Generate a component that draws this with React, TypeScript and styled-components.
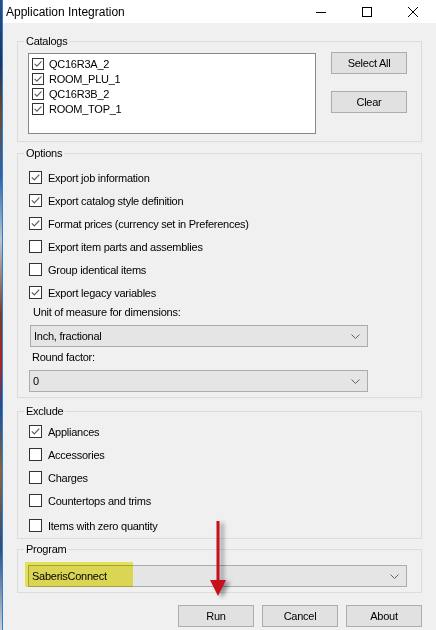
import * as React from 'react';
import styled, { createGlobalStyle } from 'styled-components';

const GlobalStyle = createGlobalStyle`
	html, body {
		margin: 0;
		padding: 0;
		background: #f0f0f0;
	}
	body {
		font-family: "Liberation Sans", Arial, sans-serif;
		color: #000;
	}
`;

const Screen = styled.div`
	position: relative;
	display: flex;
	width: 436px;
	height: 630px;
	overflow: hidden;
`;

const DesktopEdge = styled.div`
	flex: none;
	width: 2px;
	background: linear-gradient(
		to bottom,
		#2a4f86 0%, #1b3463 10%, #6b4a33 18%, #2d64a8 28%, #b9c4d0 38%,
		#7a3a2a 50%, #b02020 57%, #23508f 65%, #8a6240 75%, #2b4e80 87%, #c7ced6 100%
	);
`;

const Frame = styled.div`
	flex: 1;
	display: flex;
	flex-direction: column;
	border-left: 1px solid #2d7fd3;
	background: #f0f0f0;
`;

const TitleBar = styled.div`
	flex: none;
	display: flex;
	align-items: center;
	height: 23px;
	background: #fff;
`;

const Title = styled.div`
	flex: 1;
	padding-left: 3px;
	font-size: 12px;
`;

const CaptionButton = styled.div`
	display: flex;
	align-items: center;
	justify-content: center;
	width: 46px;
	height: 23px;
`;

const Body = styled.div`
	flex: 1;
	display: flex;
	flex-direction: column;
	padding: 12px 14px 0 14px;
	font-size: 11px;
	letter-spacing: -0.25px;
`;

const Group = styled.fieldset<{ $top?: number }>`
	margin: ${p => p.$top ?? 0}px 0 0 0;
	padding: 0;
	min-width: 0;
	border: 1px solid #dcdcdc;
`;

const Legend = styled.legend`
	margin-left: 6px;
	padding: 0 2px;
	line-height: 13px;
`;

const GroupInner = styled.div<{ $pad: string }>`
	padding: ${p => p.$pad};
`;

const CatalogRow = styled.div`
	display: flex;
	align-items: flex-start;
	gap: 15px;
`;

const ListBox = styled.div`
	box-sizing: border-box;
	width: 288px;
	height: 81px;
	padding-top: 2px;
	background: #fff;
	border: 1px solid #828790;
`;

const ListItem = styled.div`
	display: flex;
	align-items: center;
	gap: 5px;
	height: 15px;
	padding-left: 3px;
`;

const SideButtons = styled.div`
	display: flex;
	flex-direction: column;
	gap: 17px;
	margin-top: -1px;
`;

const Button = styled.div`
	box-sizing: border-box;
	display: flex;
	align-items: center;
	justify-content: center;
	width: 76px;
	height: 22px;
	background: #e1e1e1;
	border: 1px solid #adadad;
`;

const OptionRow = styled.div<{ $shift?: number }>`
	display: flex;
	align-items: center;
	gap: 6px;
	height: 23px;
	margin-top: ${p => p.$shift ?? 0}px;
`;

const Box = styled.span<{ $size: number }>`
	box-sizing: border-box;
	display: flex;
	align-items: center;
	justify-content: center;
	flex: none;
	width: ${p => p.$size}px;
	height: ${p => p.$size}px;
	background: #fff;
	border: 1px solid #333;
`;

const FieldLabel = styled.div<{ $indent: number; $top: number }>`
	margin: ${p => p.$top}px 0 0 ${p => p.$indent}px;
	line-height: 13px;
`;

const Combo = styled.div<{ $indent?: number; $top?: number; $width?: number }>`
	box-sizing: border-box;
	display: flex;
	align-items: center;
	justify-content: space-between;
	width: ${p => (p.$width ? `${p.$width}px` : 'auto')};
	height: 22px;
	margin: ${p => p.$top ?? 0}px 0 0 ${p => p.$indent ?? 0}px;
	padding: 0 7px 0 3px;
	background: #e5e5e5;
	border: 1px solid #acacac;
`;

const ProgramSlot = styled.div`
	position: relative;
`;

// highlighter stroke laid over the program picker
const Highlight = styled.span`
	position: absolute;
	left: -3px;
	top: -3px;
	width: 108px;
	height: 25px;
	background: #f3ef5c;
	mix-blend-mode: multiply;
	pointer-events: none;
`;

const Footer = styled.div`
	display: flex;
	justify-content: flex-end;
	gap: 8px;
	margin-top: 12px;
`;

const Pointer = styled.svg`
	position: absolute;
	left: 205px;
	top: 515px;
	overflow: visible;
	filter: drop-shadow(4px 2px 2px rgba(0, 0, 0, 0.4));
`;

const Check = ({ size, on }: { size: number; on: boolean }) => (
	<Box $size={size}>
		{on && (
			<svg width={size - 2} height={size - 2} viewBox="0 0 11 11">
				<path d="M1.8 5.4 L4.3 7.9 L9.3 2.6" fill="none" stroke="#5c5c5c" strokeWidth="1.2" />
			</svg>
		)}
	</Box>
);

const Chevron = () => (
	<svg width="9" height="5" viewBox="0 0 9 5">
		<path d="M0.5 0.5 L4.5 4.5 L8.5 0.5" fill="none" stroke="#606060" strokeWidth="1" />
	</svg>
);

const catalogs = ['QC16R3A_2', 'ROOM_PLU_1', 'QC16R3B_2', 'ROOM_TOP_1'];

const options = [
	{ label: 'Export job information', on: true },
	{ label: 'Export catalog style definition', on: true },
	{ label: 'Format prices (currency set in Preferences)', on: true },
	{ label: 'Export item parts and assemblies', on: false },
	{ label: 'Group identical items', on: false },
	{ label: 'Export legacy variables', on: true },
];

const excludes = [
	{ label: 'Appliances', on: true },
	{ label: 'Accessories', on: false },
	{ label: 'Charges', on: false },
	{ label: 'Countertops and trims', on: false },
	{ label: 'Items with zero quantity', on: false, shift: 2 },
];

const App: React.FC = () => {
	return (
		<Screen>
			<GlobalStyle />
			<DesktopEdge />
			<Frame>
				<TitleBar>
					<Title>Application Integration</Title>
					<CaptionButton>
						<svg width="10" height="10" viewBox="0 0 10 10">
							<path d="M0 5.5 H10" stroke="#000" strokeWidth="1" />
						</svg>
					</CaptionButton>
					<CaptionButton>
						<svg width="10" height="10" viewBox="0 0 10 10">
							<rect x="0.5" y="0.5" width="9" height="9" fill="none" stroke="#000" strokeWidth="1" />
						</svg>
					</CaptionButton>
					<CaptionButton>
						<svg width="10" height="10" viewBox="0 0 10 10">
							<path d="M0 0 L10 10 M10 0 L0 10" stroke="#000" strokeWidth="1" />
						</svg>
					</CaptionButton>
				</TitleBar>
				<Body>
					<Group>
						<Legend>Catalogs</Legend>
						<GroupInner $pad="5px 14px 7px 10px">
							<CatalogRow>
								<ListBox>
									{catalogs.map(name => (
										<ListItem key={name}>
											<Check size={12} on />
											<span>{name}</span>
										</ListItem>
									))}
								</ListBox>
								<SideButtons>
									<Button>Select All</Button>
									<Button>Clear</Button>
								</SideButtons>
							</CatalogRow>
						</GroupInner>
					</Group>

					<Group $top={5}>
						<Legend>Options</Legend>
						<GroupInner $pad="6px 0 5px 11px">
							{options.map(o => (
								<OptionRow key={o.label}>
									<Check size={13} on={o.on} />
									<span>{o.label}</span>
								</OptionRow>
							))}
							<FieldLabel $indent={4} $top={2}>Unit of measure for dimensions:</FieldLabel>
							<Combo $indent={1} $top={6} $width={338}>
								<span>Inch, fractional</span>
								<Chevron />
							</Combo>
							<FieldLabel $indent={3} $top={4}>Round factor:</FieldLabel>
							<Combo $top={6} $width={339}>
								<span>0</span>
								<Chevron />
							</Combo>
						</GroupInner>
					</Group>

					<Group $top={7}>
						<Legend>Exclude</Legend>
						<GroupInner $pad="2px 0 1px 11px">
							{excludes.map(o => (
								<OptionRow key={o.label} $shift={o.shift}>
									<Check size={13} on={o.on} />
									<span>{o.label}</span>
								</OptionRow>
							))}
						</GroupInner>
					</Group>

					<Group $top={4}>
						<Legend>Program</Legend>
						<GroupInner $pad="9px 14px 5px 10px">
							<ProgramSlot>
								<Combo>
									<span>SaberisConnect</span>
									<Chevron />
								</Combo>
								<Highlight />
							</ProgramSlot>
						</GroupInner>
					</Group>

					<Footer>
						<Button>Run</Button>
						<Button>Cancel</Button>
						<Button>About</Button>
					</Footer>
				</Body>
			</Frame>
			<Pointer width="26" height="84" viewBox="0 0 26 84">
				<path d="M13 6 V70" stroke="#c4111b" strokeWidth="3" />
				<path d="M5 65 H21 L13 81 Z" fill="#c4111b" />
			</Pointer>
		</Screen>
	);
};

export default App;
